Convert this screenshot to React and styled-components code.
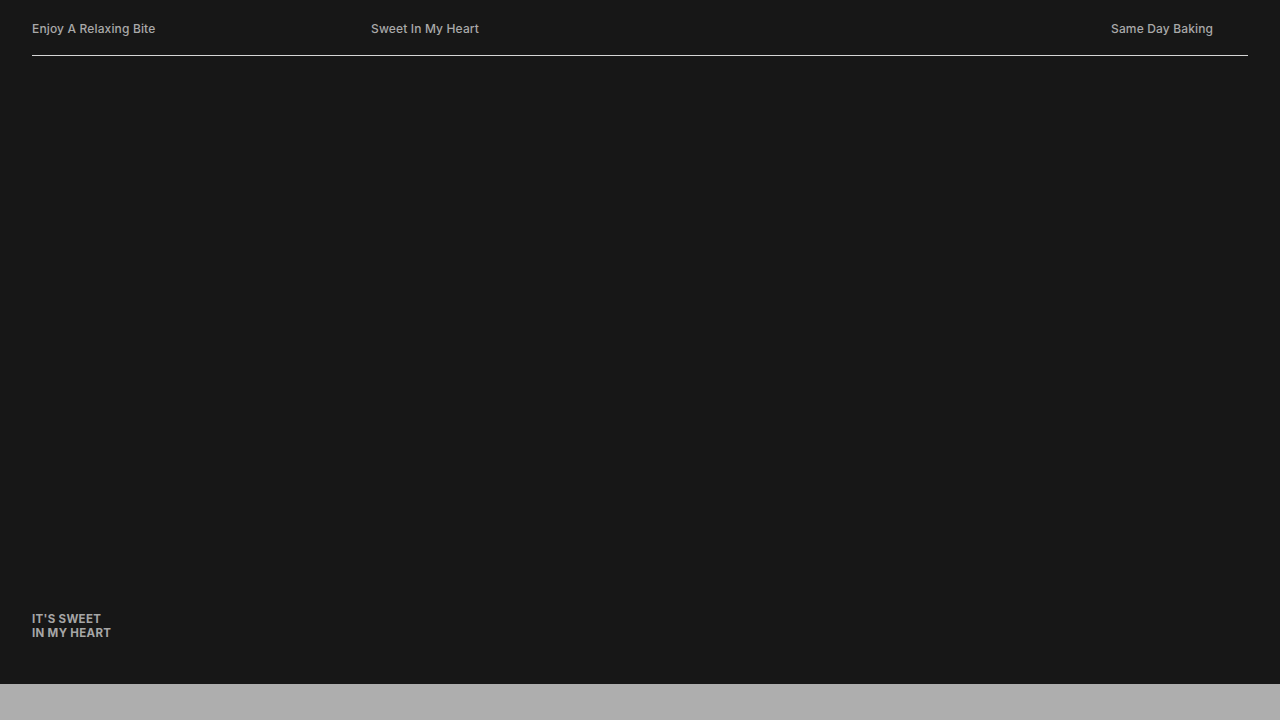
import React from "react";
import styled, { createGlobalStyle } from "styled-components";

const GlobalStyle = createGlobalStyle`
  html, body {
    margin: 0;
    padding: 0;
    background: #aeaeae;
    font-family: Inter, "Noto Sans", "Liberation Sans", sans-serif;
  }
`;

const SHero = styled.section`
  height: 684px;
  box-sizing: border-box;
  background: #171717;
  padding: 21px 32px 44px;
  display: flex;
  flex-direction: column;
  justify-content: space-between;
`;

const SNav = styled.nav`
  display: grid;
  grid-template-columns: 339px 1fr 137px;
  align-items: center;
  height: 35px;
  box-sizing: border-box;
  padding-bottom: 19px;
  border-bottom: 1px solid #d6d6d6;
`;

const SNavItem = styled.span`
  font-size: 12px;
  line-height: 16px;
  font-weight: 500;
  color: #a9a9a9;
  letter-spacing: 0.15px;
`;

const STagline = styled.h2`
  margin: 0;
  font-size: 11.5px;
  line-height: 14px;
  font-weight: 700;
  color: #a6a6a6;
  text-transform: uppercase;
  letter-spacing: 0.3px;
`;

export default function App() {
  return (
    <>
      <GlobalStyle />
      <SHero>
        <SNav>
          <SNavItem>Enjoy A Relaxing Bite</SNavItem>
          <SNavItem>Sweet In My Heart</SNavItem>
          <SNavItem>Same Day Baking</SNavItem>
        </SNav>
        <STagline>
          It's sweet
          <br />
          in my heart
        </STagline>
      </SHero>
    </>
  );
}
